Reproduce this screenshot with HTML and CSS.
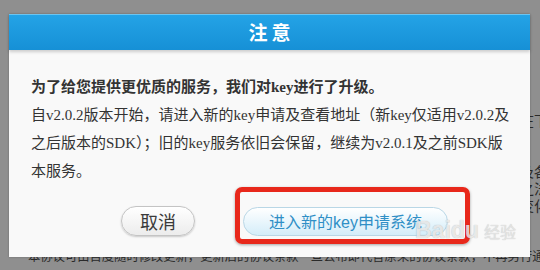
FILE: index.html
```html
<!DOCTYPE html>
<html lang="zh-CN">
<head>
<meta charset="utf-8">
<title>注意</title>
<link rel="stylesheet" href="styles.css">
</head>
<body>
<div class="page">
  <div class="row">本协议的相关内容请仔细阅读，并在下</div>
  <div class="row"></div>
  <div class="row"></div>
  <div class="row">开发者须遵守国家相关法律法规及各</div>
  <div class="row">不得利用本服务从事违反法律法规之法</div>
  <div class="row">百度有权根据实际情况对服务内容进行变化</div>
  <div class="row"></div>
  <div class="row"></div>
  <div class="row row-last">本协议可由百度随时修改更新，更新后的协议条款一旦公布即代替原来的协议条款，不再另行通知</div>
</div>

<div class="dialog">
  <div class="dialog-head">注意</div>
  <div class="dialog-body">
    <p class="lead">为了给您提供更优质的服务，我们对key进行了升级。</p>
    <p class="desc">自v2.0.2版本开始，请进入新的key申请及查看地址（新key仅适用v2.0.2及<br>之后版本的SDK）；旧的key服务依旧会保留，继续为v2.0.1及之前SDK版<br>本服务。</p>
    <div class="actions">
      <button class="btn btn-cancel">取消</button>
      <div class="mark">
        <button class="btn btn-go">进入新的key申请系统</button>
      </div>
    </div>
  </div>
  <div class="watermark"><span class="wm-en">Baidu</span><span class="wm-cn">经验</span></div>
</div>
</body>
</html>
```

FILE: styles.css
```css
html, body {
  margin: 0;
  padding: 0;
}
body {
  width: 540px;
  height: 270px;
  overflow: hidden;
  position: relative;
  background: #8f8f8f;
  font-family: "Liberation Serif", "Noto Sans CJK SC", serif;
}

.page {
  padding: 113px 0 0 28px;
  display: flex;
  flex-direction: column;
}
.row {
  height: 17px;
  line-height: 17px;
  font-size: 14px;
  color: #2a2a2a;
  white-space: nowrap;
  display: flex;
  justify-content: flex-end;
  margin-right: -8px;
}
.row-last {
  justify-content: flex-start;
  font-size: 12.3px;
}

.dialog {
  position: absolute;
  left: 9px;
  top: 14px;
  width: 521px;
  height: 243px;
  background: #f9f9f9;
  box-shadow: 0 0 2px rgba(0,0,0,0.25);
}
.dialog-head {
  height: 36px;
  line-height: 34px;
  text-align: center;
  color: #ffffff;
  font-family: "Noto Sans CJK SC", sans-serif;
  font-weight: bold;
  font-size: 19px;
  letter-spacing: 4px;
  text-indent: 4px;
  background: linear-gradient(#24a3e6, #1690d6);
  border-top: 1px solid #6cc4ef;
  box-sizing: border-box;
  box-shadow: 0 2px 3px rgba(0,0,0,0.18);
}
.dialog-body {
  padding: 23px 0 0 22px;
  color: #333333;
  font-size: 15px;
}
.lead, .desc {
  margin: 0;
  line-height: 28px;
  white-space: nowrap;
}
.lead {
  font-weight: bold;
}

.actions {
  display: flex;
  align-items: center;
  gap: 48px;
  padding-left: 90px;
  margin-top: 21px;
}
.btn {
  margin: 0;
  font-family: "Liberation Sans", "Noto Sans CJK SC", sans-serif;
  height: 30px;
  border-radius: 15px;
  cursor: pointer;
}
.btn-cancel {
  width: 74px;
  font-size: 18px;
  color: #3a3a3a;
  background: linear-gradient(#ffffff, #ececec);
  border: 1px solid #c4c4c4;
  box-shadow: 0 1px 2px rgba(0,0,0,0.2);
}
.mark {
  position: relative;
}
.mark::after {
  content: "";
  position: absolute;
  left: -8px;
  right: -22px;
  top: -20px;
  bottom: -8px;
  border: 5px solid #e8281b;
  border-radius: 7px;
  box-shadow: 0 1px 3px rgba(0,0,0,0.35);
  pointer-events: none;
}
.btn-go {
  width: 205px;
  height: 29px;
  font-size: 16px;
  color: #2f8fc6;
  background: linear-gradient(#ffffff, #d4edf9);
  border: 1px solid #b9d7e6;
}

.watermark {
  position: absolute;
  left: 406px;
  top: 203px;
  display: flex;
  align-items: baseline;
  gap: 5px;
  white-space: nowrap;
  font-family: "Liberation Sans", "Noto Sans CJK SC", sans-serif;
  pointer-events: none;
  z-index: 2;
}
.wm-en {
  font-size: 23px;
  font-weight: bold;
  color: rgba(248,248,248,0.78);
  text-shadow: 0 0 1px rgba(0,0,0,0.3);
}
.wm-cn {
  font-size: 16px;
  color: rgba(235,235,235,0.8);
  text-shadow: 0 0 1px rgba(0,0,0,0.25);
}
```
